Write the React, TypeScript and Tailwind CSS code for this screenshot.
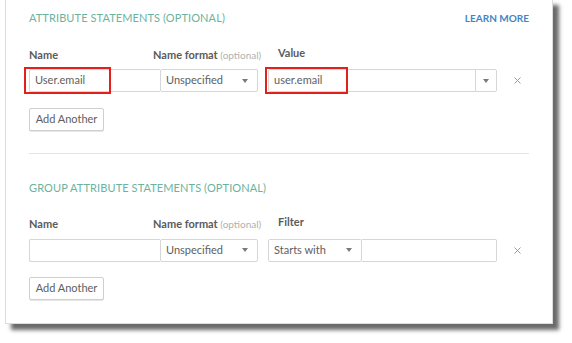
import { ReactNode } from 'react';

const font = { fontFamily: 'Lato, "Open Sans", sans-serif' };

function Label({ children, optional }: { children: ReactNode; optional?: boolean }) {
  return (
    <span className="text-[11px] font-bold text-[#5b5b5b]">
      {children}
      {optional && <span className="font-normal text-[10px] text-[#b0b0b0]"> (optional)</span>}
    </span>
  );
}

function Caret() {
  return (
    <svg width="6" height="4" viewBox="0 0 6 4" className="shrink-0">
      <path d="M0 0 L6 0 L3 4 Z" fill="#7a7a7a" />
    </svg>
  );
}

function SelectBox({ text, width }: { text: string; width: string }) {
  return (
    <div
      className={`${width} shrink-0 h-[23px] flex items-center justify-between pl-[5px] pr-[9px] border border-[#d6d6d6] rounded-[2px] bg-white text-[11px] text-[#5e5e5e]`}
    >
      <span>{text}</span>
      <Caret />
    </div>
  );
}

function RedMark({ className }: { className: string }) {
  return <div className={`absolute border-2 border-[#e3211c] pointer-events-none ${className}`} />;
}

function RemoveX() {
  return (
    <div className="ml-[16px] w-[8px] shrink-0 flex justify-center items-center">
      <svg width="7" height="7" viewBox="0 0 7 7">
        <path d="M0.5 0.5 L6.5 6.5 M6.5 0.5 L0.5 6.5" stroke="#9a9a9a" strokeWidth="1" />
      </svg>
    </div>
  );
}

function AddAnother() {
  return (
    <button className="w-[75px] h-[23px] border border-[#cfcfcf] rounded-[2px] bg-white text-[11px] text-[#5e5e5e] shadow-[0_1px_0_#e6e6e6]">
      Add Another
    </button>
  );
}

export default function App() {
  return (
    <div className="w-[572px] h-[343px] bg-white overflow-hidden" style={font}>
      <div className="ml-[5px] mt-[-1px] w-[548px] h-[325px] border border-[#dcdcdc] bg-white shadow-[6px_6px_4px_#6a6a6a] pl-[23px] pr-[23px]">
        {/* Attribute statements */}
        <div className="flex items-center justify-between h-[19px] mt-[9px]">
          <span className="text-[11px] tracking-[0.1px] text-[#6bb3a1]">ATTRIBUTE STATEMENTS (OPTIONAL)</span>
          <span className="text-[10px] font-bold text-[#4385c2]">LEARN MORE</span>
        </div>

        <div className="flex h-[14px] mt-[18px] items-center">
          <div className="w-[124px]"><Label>Name</Label></div>
          <div className="w-[125px]"><Label optional>Name format</Label></div>
          <Label>Value</Label>
        </div>

        <div className="flex items-center mt-[9px]">
          <div className="relative shrink-0 w-[131px] h-[23px] border border-[#d6d6d6] border-r-0 rounded-l-[2px] flex items-center pl-[5px] text-[11px] text-[#5e5e5e]">
            User.email
            <RedMark className="left-[-6px] top-[-3px] w-[87px] h-[27px]" />
          </div>
          <SelectBox text="Unspecified" width="w-[98px]" />
          <div className="relative shrink-0 ml-[10px] w-[229px] h-[23px] border border-[#d6d6d6] rounded-[2px] flex items-center text-[11px] text-[#5e5e5e]">
            <span className="flex-1 pl-[5px]">user.email</span>
            <div className="w-[21px] h-full border-l border-[#d6d6d6] flex items-center justify-center">
              <Caret />
            </div>
            <RedMark className="left-[-4px] top-[-3px] w-[83px] h-[27px]" />
          </div>
          <RemoveX />
        </div>

        <div className="mt-[13px]">
          <AddAnother />
        </div>

        <div className="mt-[22px] h-px bg-[#e4e4e4] w-[500px]" />

        {/* Group attribute statements */}
        <div className="h-[19px] mt-[25px] flex items-center">
          <span className="text-[11px] tracking-[0.1px] text-[#6bb3a1]">GROUP ATTRIBUTE STATEMENTS (OPTIONAL)</span>
        </div>

        <div className="flex h-[14px] mt-[17px] items-center">
          <div className="w-[124px]"><Label>Name</Label></div>
          <div className="w-[125px]"><Label optional>Name format</Label></div>
          <Label>Filter</Label>
        </div>

        <div className="flex items-center mt-[10px]">
          <div className="shrink-0 w-[131px] h-[23px] border border-[#d6d6d6] border-r-0 rounded-l-[2px]" />
          <SelectBox text="Unspecified" width="w-[98px]" />
          <div className="ml-[10px] flex shrink-0">
            <SelectBox text="Starts with" width="w-[94px]" />
            <div className="w-[135px] h-[23px] border border-[#d6d6d6] border-l-0 rounded-r-[2px]" />
          </div>
          <RemoveX />
        </div>

        <div className="mt-[12px]">
          <AddAnother />
        </div>
      </div>
    </div>
  );
}
